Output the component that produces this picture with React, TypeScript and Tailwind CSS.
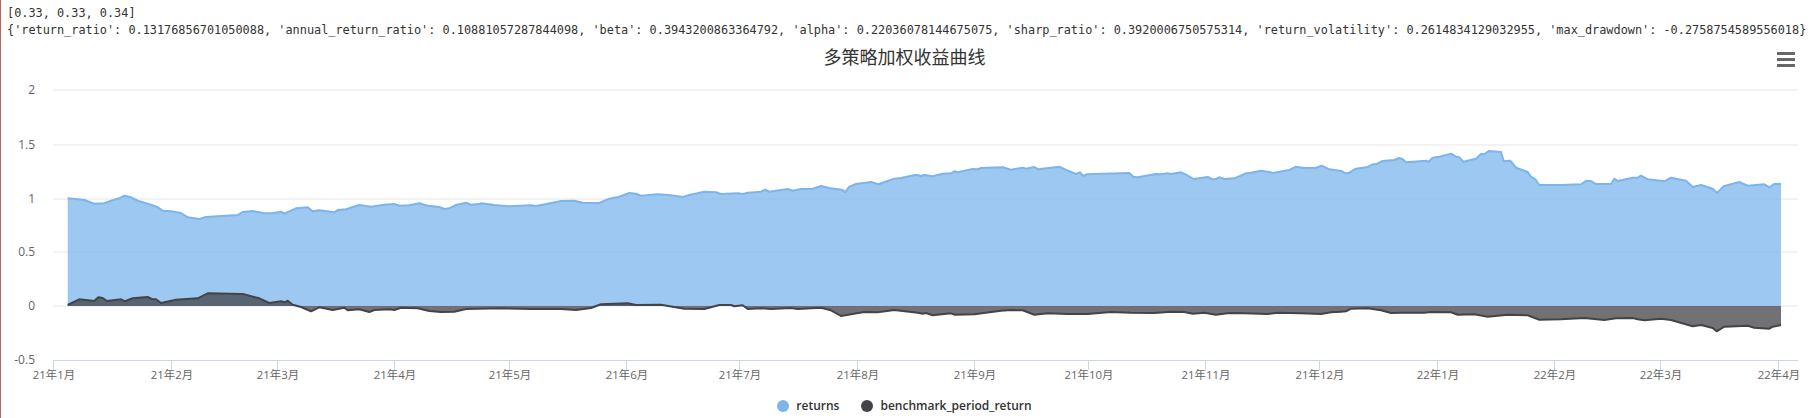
import React from 'react';

type Segment = [number, number, number[][]];

// traced from the chart, each block is [x offset, y offset, points at 3x]
const returnsTrace: Segment[] = [
  [50, 140, [[50,175],[75,177],[100,180],[130,191],[160,190],[180,182],[205,175],[220,167],[240,172],[260,182],[300,194],[320,202],[335,212],[360,214],[390,219],[410,232],[445,237],[465,231],[560,225],[575,216],[605,213],[640,220],[665,220],[690,215],[700,221],[735,205],[770,202],[785,214],[805,211],[850,217],[860,210],[885,208],[925,195],[960,200],[1000,194],[1030,192],[1045,197],[1075,196],[1105,190],[1130,197],[1165,201],[1180,207],[1195,205],[1215,195],[1245,188],[1260,194],[1290,191]]],
  [480, 140, [[0,190],[40,195],[80,199],[150,196],[165,198],[215,188],[240,183],[280,182],[305,188],[355,189],[385,176],[415,170],[445,159],[465,161],[480,167],[530,163],[570,166],[605,171],[625,165],[670,155],[705,157],[720,162],[770,160],[785,162],[800,158],[840,155],[852,149],[865,155],[920,147],[935,152],[960,147],[995,146],[1020,138],[1045,144],[1085,150],[1092,157],[1105,140],[1125,132],[1170,126],[1192,133],[1240,116],[1260,114],[1305,104]]],
  [900, 130, [[0,145],[45,134],[60,138],[70,135],[95,139],[125,131],[150,130],[160,124],[170,127],[215,117],[230,118],[240,114],[305,112],[330,119],[365,113],[375,116],[400,111],[412,118],[475,110],[495,120],[525,132],[537,127],[547,138],[557,133],[685,129],[697,140],[710,142],[765,132],[780,133],[800,130],[810,132],[840,127],[855,134],[878,147],[920,141],[935,148],[945,147],[955,142],[970,147],[1000,145],[1035,130],[1050,128],[1080,122],[1105,126],[1115,129],[1165,120],[1185,110],[1210,114],[1245,113],[1262,107],[1285,118]]],
  [1300, 120, [[120,153],[135,160],[145,158],[165,146],[200,141],[215,133],[225,133],[245,123],[280,120],[295,114],[305,118],[315,127],[375,122],[383,125],[395,113],[415,110],[450,101],[465,110],[475,112],[487,125],[525,116],[540,102],[550,103],[563,93],[600,96],[608,124],[628,122],[645,143],[680,156],[690,170],[703,178],[715,195]]],
  [1500, 140, [[180,135],[240,133],[255,123],[270,123],[285,132],[330,132],[340,116],[350,123],[395,113],[410,113],[420,107],[440,118],[490,124],[510,113],[555,122],[575,141],[600,135],[635,146],[648,159],[668,139],[715,126],[740,137],[790,133],[805,142],[820,132],[840,132]]],
];

const benchmarkTrace: Segment[] = [
  [0, 230, [[200,225],[235,208],[280,213],[292,202],[305,204],[318,213],[360,208],[372,214],[395,205],[440,201],[455,208],[465,208],[480,219],[525,209],[590,205],[620,190],[725,192],[775,205],[805,219],[840,214],[852,217],[860,212],[875,224],[900,231],[930,244],[955,232],[995,240],[1030,233],[1040,241],[1075,238],[1105,246],[1120,240],[1165,238],[1180,240],[1200,233],[1250,235],[1285,243],[1320,246],[1360,245],[1395,237],[1500,235]]],
  [500, 300, [[90,27],[180,27],[225,30],[270,24]]],
  [600, 280, [[0,73],[80,70],[105,75],[180,74],[250,86],[310,87],[355,75],[390,75],[400,79],[425,76],[440,87],[480,85],[510,87],[570,84],[590,87],[660,83],[690,91],[720,108],[750,103],[790,96],[830,97],[880,90],[950,98],[965,101],[975,99],[995,106],[1050,100],[1060,104],[1120,103]]],
  [900, 290, [[300,62],[330,60],[365,61],[400,74],[440,70],[500,72],[560,72],[630,66],[690,68],[760,69],[810,65],[850,66],[875,71],[910,68],[945,74],[985,69],[1030,70],[1100,72],[1130,68],[1200,70],[1260,72],[1290,67]]],
  [1300, 240, [[120,215],[135,214],[150,206],[200,205],[240,211],[270,219],[300,218],[370,218],[390,216],[450,217],[470,224],[520,223],[560,230],[620,224],[680,226],[715,239]]],
  [1500, 290, [[180,88],[250,84],[310,90],[345,85],[395,84],[410,88],[430,91],[480,86],[510,90],[575,109],[600,105],[635,114],[647,124],[670,110],[740,107],[760,113],[805,116],[815,110],[840,105]]],
];

const gridRows = [
  { label: '2', y: 90 },
  { label: '1.5', y: 145 },
  { label: '1', y: 199 },
  { label: '0.5', y: 252 },
  { label: '0', y: 306 },
];

const monthTicks = [
  { label: '21年1月', x: 52 },
  { label: '21年2月', x: 170 },
  { label: '21年3月', x: 276 },
  { label: '21年4月', x: 393 },
  { label: '21年5月', x: 508 },
  { label: '21年6月', x: 625 },
  { label: '21年7月', x: 738 },
  { label: '21年8月', x: 856 },
  { label: '21年9月', x: 973 },
  { label: '21年10月', x: 1087 },
  { label: '21年11月', x: 1204 },
  { label: '21年12月', x: 1318 },
  { label: '22年1月', x: 1436 },
  { label: '22年2月', x: 1553 },
  { label: '22年3月', x: 1659 },
  { label: '22年4月', x: 1777 },
];

const flatten = (trace: Segment[]) =>
  trace.flatMap(([ox, oy, pts]) => pts.map(([x, y]) => [ox + x / 3, oy + y / 3]));

const toLine = (pts: number[][]) =>
  pts.map(([x, y], i) => `${i ? 'L' : 'M'}${x.toFixed(1)} ${y.toFixed(1)}`).join(' ');

const toArea = (pts: number[][]) =>
  `${toLine(pts)} L${pts[pts.length - 1][0].toFixed(1)} 306 L${pts[0][0].toFixed(1)} 306 Z`;

function Chart() {
  const returns = flatten(returnsTrace);
  const benchmark = flatten(benchmarkTrace);

  return (
    <svg width={1808} height={305} viewBox="0 78 1808 305" className="block font-['Open_Sans','Noto_Sans_CJK_SC',sans-serif]">
      {gridRows.map((row) => (
        <g key={row.label}>
          <line x1={52} x2={1797} y1={row.y} y2={row.y} stroke="#e6e6e6" />
          <text x={34} y={row.y + 4} textAnchor="end" fontSize={12} fill="#666666">{row.label}</text>
        </g>
      ))}
      <text x={34} y={364} textAnchor="end" fontSize={12} fill="#666666">-0.5</text>
      <line x1={52} x2={1797} y1={360.5} y2={360.5} stroke="#ccd6eb" />
      {monthTicks.map((tick) => (
        <g key={tick.label}>
          <line x1={tick.x + 0.5} x2={tick.x + 0.5} y1={360} y2={370} stroke="#ccd6eb" />
          <text x={tick.x + 1} y={379} textAnchor="middle" fontSize={11.4} fill="#666666">{tick.label}</text>
        </g>
      ))}
      <path d={toArea(returns)} fill="#7cb5ec" fillOpacity={0.75} />
      <path d={toLine(returns)} fill="none" stroke="#7cb5ec" strokeWidth={2} strokeLinejoin="round" />
      <path d={toArea(benchmark)} fill="#434348" fillOpacity={0.75} />
      <path d={toLine(benchmark)} fill="none" stroke="#434348" strokeWidth={2} strokeLinejoin="round" />
    </svg>
  );
}

export default function App() {
  return (
    <div className="w-[1818px] h-[418px] bg-white overflow-hidden border-l border-[#b5655f]">
      <div className="pl-[6px] pt-[5px] font-['DejaVu_Sans_Mono',monospace] text-[11.86px] leading-[17px] text-[#333333] whitespace-pre">
        <div>[0.33, 0.33, 0.34]</div>
        <div>{"{'return_ratio': 0.13176856701050088, 'annual_return_ratio': 0.10881057287844098, 'beta': 0.3943200863364792, 'alpha': 0.22036078144675075, 'sharp_ratio': 0.3920006750575314, 'return_volatility': 0.2614834129032955, 'max_drawdown': -0.2758754589556018}"}</div>
      </div>
      <div className="relative w-[1807px] font-['Open_Sans','Noto_Sans_CJK_SC',sans-serif]">
        <div className="h-[39px] pt-[5px] text-center text-[18px] leading-[27px] text-[#333333]">多策略加权收益曲线</div>
        <button type="button" className="absolute left-[1776px] top-[13px] flex w-[18px] flex-col gap-[3px]">
          <span className="block h-[3px] w-full bg-[#666666]" />
          <span className="block h-[3px] w-full bg-[#666666]" />
          <span className="block h-[3px] w-full bg-[#666666]" />
        </button>
        <Chart />
        <div className="flex items-center justify-center gap-[22px] pt-[15px] text-[12px] leading-[16px] font-semibold text-[#333333]">
          <div className="flex items-center gap-[7px]">
            <span className="h-[12px] w-[12px] rounded-full bg-[#7cb5ec]" />
            <span>returns</span>
          </div>
          <div className="flex items-center gap-[7px]">
            <span className="h-[12px] w-[12px] rounded-full bg-[#434348]" />
            <span>benchmark_period_return</span>
          </div>
        </div>
      </div>
    </div>
  );
}
